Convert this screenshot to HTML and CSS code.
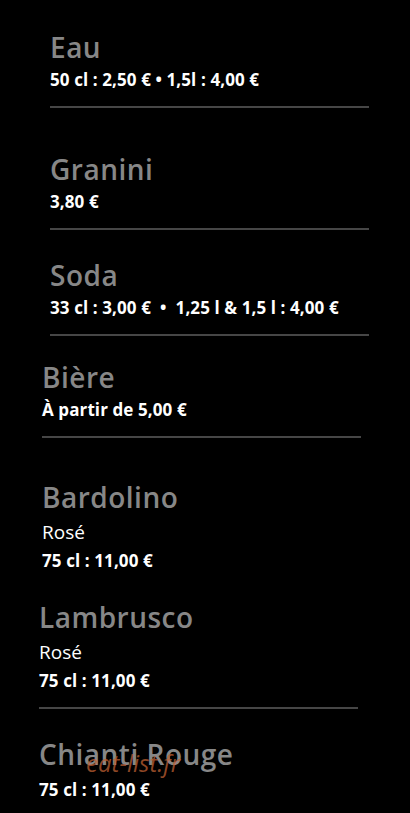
FILE: index.html
```html
<!DOCTYPE html>
<html lang="fr">
<head>
  <meta charset="UTF-8">
  <meta name="viewport" content="width=device-width, initial-scale=1.0">
  <title>Carte des boissons</title>
  <link rel="stylesheet" href="styles.css">
</head>
<body>
  <div class="carte">
    <div class="plat eau">
      <h2>Eau</h2>
      <p class="prix">50 cl : 2,50 € • 1,5l : 4,00 €</p>
      <div class="trait"></div>
    </div>

    <div class="plat granini">
      <h2>Granini</h2>
      <p class="prix">3,80 €</p>
      <div class="trait"></div>
    </div>

    <div class="plat soda">
      <h2>Soda</h2>
      <p class="prix">33 cl : 3,00 € &nbsp;•&nbsp; 1,25 l &amp; 1,5 l : 4,00 €</p>
      <div class="trait"></div>
    </div>

    <div class="plat biere">
      <h2>Bière</h2>
      <p class="prix">À partir de 5,00 €</p>
      <div class="trait"></div>
    </div>

    <div class="plat bardolino">
      <h2>Bardolino</h2>
      <p class="desc">Rosé</p>
      <p class="prix">75 cl : 11,00 €</p>
    </div>

    <div class="plat lambrusco">
      <h2>Lambrusco</h2>
      <p class="desc">Rosé</p>
      <p class="prix">75 cl : 11,00 €</p>
      <div class="trait"></div>
    </div>

    <div class="plat chianti">
      <h2>Chianti Rouge</h2>
      <p class="prix">75 cl : 11,00 €</p>
      <span class="filigrane">eat-list.fr</span>
    </div>
  </div>
</body>
</html>
```

FILE: styles.css
```css
body { margin: 0; background: #000; font-family: "Open Sans", "Noto Sans", sans-serif; color: #fff; }
.carte { padding-top: 30px; }
.plat { position: relative; width: 319px; }

/* chaque bloc a son propre retrait et son espacement */
.eau { margin-left: 50px; }
.granini { margin-left: 50px; margin-top: 44px; }
.soda { margin-left: 50px; margin-top: 28px; }
.biere { margin-left: 42px; margin-top: 24px; }
.bardolino { margin-left: 42px; margin-top: 42px; }
.lambrusco { margin-left: 39px; margin-top: 27px; }
.chianti { margin-left: 39px; margin-top: 28px; }
.chianti .prix { margin-top: 7px; }

h2 { margin: 0; font-size: 28px; line-height: 34px; font-weight: 600; letter-spacing: 0.5px; color: #878787; }
.prix { margin: 4px 0 0; font-size: 17px; line-height: 24px; font-weight: 700; letter-spacing: 0.1px; }
.desc { margin: 3px 0 0; font-size: 19px; line-height: 30px; }
.desc + .prix { margin-top: 2px; }
.trait { height: 2px; background: #464646; margin-top: 14px; }
.filigrane { position: absolute; left: 47px; top: 9px; font-size: 24px; font-style: italic; color: rgba(190, 95, 50, 0.75); }
```
